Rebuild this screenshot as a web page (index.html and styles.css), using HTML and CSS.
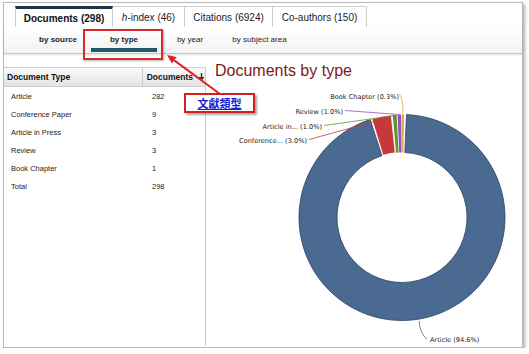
FILE: index.html
```html
<!DOCTYPE html>
<html lang="en">

<head>
  <meta name="viewport" content="width=device-width, initial-scale=1.0" />
  <title>Documents by type</title>
  <link rel="stylesheet" href="styles.css">
</head>

<body>

  <div class="frame">

    <div class="tabs">
      <div class="tab active" style="width:98px">Documents (298)</div>
      <div class="tab" style="width:72px"><i>h</i>-index (46)</div>
      <div class="tab" style="width:88px">Citations (6924)</div>
      <div class="tab" style="width:94px">Co-authors (150)</div>
    </div>

    <div class="subnav">
      <div class="sub bold">by source</div>
      <div class="sub bold current">by type</div>
      <div class="sub">by year</div>
      <div class="sub wide">by subject area</div>
    </div>

    <div class="main">
      <div class="left">
        <div class="row head">
          <div class="name">Document Type</div>
          <div class="count">Documents
            <svg class="sort" width="7" height="8" viewBox="0 0 7 8"><path d="M3.5 0v5" stroke="#333" stroke-width="1.4"/><path d="M0.5 4h6L3.5 8z" fill="#333"/></svg>
          </div>
        </div>
        <div class="row"><div class="name">Article</div><div class="count">282</div></div>
        <div class="row"><div class="name">Conference Paper</div><div class="count">9</div></div>
        <div class="row"><div class="name">Article in Press</div><div class="count">3</div></div>
        <div class="row"><div class="name">Review</div><div class="count">3</div></div>
        <div class="row"><div class="name">Book Chapter</div><div class="count">1</div></div>
        <div class="row"><div class="name">Total</div><div class="count">298</div></div>
      </div>

      <div class="right">
        <div class="chart-title">Documents by type</div>
        <svg class="chart" width="317" height="260" viewBox="0 0 317 260">
          <!-- slices -->
          <path d="M200.49 28.6 A103 103 0 1 1 164.17 33.54 L175.91 69.68 A65 65 0 1 0 198.84 66.56 Z" fill="#4a6a92" stroke="#26425f" stroke-width="0.8"/>
          <path d="M165.88 33.0 A103 103 0 0 1 185.24 29.07 L189.21 66.86 A65 65 0 0 0 176.99 69.34 Z" fill="#c6383c" stroke="#fff" stroke-width="0.8"/>
          <path d="M186.67 28.92 A103 103 0 0 1 190.61 28.64 L192.6 66.59 A65 65 0 0 0 190.11 66.77 Z" fill="#5f942f"/>
          <path d="M191.51 28.6 A103 103 0 0 1 195.28 28.5 L195.55 66.5 A65 65 0 0 0 193.17 66.56 Z" fill="#8c56c6"/>
          <path d="M196 28.5 A103 103 0 0 1 198.16 28.52 L197.36 66.51 A65 65 0 0 0 196 66.5 Z" fill="#f0a447"/>

          <!-- leader lines -->
          <path d="M193 8 Q197 10 197 28" fill="none" stroke="#f0a447" stroke-width="0.8"/>
          <path d="M139 24.5 L193 28.5" fill="none" stroke="#8c56c6" stroke-width="0.8"/>
          <path d="M118 39.5 L189 29.5" fill="none" stroke="#5f942f" stroke-width="0.8"/>
          <path d="M103 53.5 L181 32" fill="none" stroke="#c6383c" stroke-width="0.8"/>
          <path d="M213 235 Q214 248 221 253" fill="none" stroke="#4a6a92" stroke-width="0.8"/>

          <!-- labels -->
          <text x="193" y="13" text-anchor="end" class="lbl">Book Chapter (0.3%)</text>
          <text x="137" y="28" text-anchor="end" class="lbl">Review (1.0%)</text>
          <text x="116" y="43" text-anchor="end" class="lbl">Article in... (1.0%)</text>
          <text x="101" y="57" text-anchor="end" class="lbl">Conference... (3.0%)</text>
          <text x="224" y="256" class="lbl">Article (94.6%)</text>
        </svg>
      </div>
    </div>

    <!-- annotation -->
    <div class="mark"></div>
    <svg class="arrow" width="70" height="50" viewBox="0 0 70 50">
      <line x1="60" y1="44" x2="14.25" y2="10.34" stroke="#e02222" stroke-width="2"/>
      <polygon points="7,5 16.62,7.12 11.88,13.56" fill="#e02222"/>
    </svg>
    <div class="note">文獻類型</div>

  </div>

</body>

</html>
```

FILE: styles.css
```css
* {
  padding: 0;
  margin: 0;
  box-sizing: border-box;
  font-family: 'Liberation Sans', Arial, sans-serif;
}

body {
  background-color: #ffffff;
  color: #111111;
}

.frame {
  position: relative;
  margin: 2px 0 0 3px;
  width: 520px;
  height: 346px;
  border: 1px solid #b9b9b9;
  box-shadow: 2px 2px 3px rgba(0, 0, 0, 0.3);
  background-color: #ffffff;
}

/* top tabs */
.tabs {
  display: flex;
  height: 24px;
  padding: 3px 0 0 11px;
}

.tab {
  height: 21px;
  font-size: 10px;
  color: #222222;
  display: flex;
  align-items: center;
  justify-content: center;
  border: 1px solid #cfcfcf;
  border-bottom: none;
  border-left: none;
  background-color: #ffffff;
}

.tab.active {
  font-weight: bold;
  border-top: 3px solid #1d3548;
  border-left: 1px solid #cfcfcf;
  color: #111111;
}

/* sub navigation */
.subnav {
  display: flex;
  height: 27px;
  padding-left: 21px;
  background: linear-gradient(#ffffff, #f2f2f2);
  border-bottom: 1px solid #c8c8c8;
  box-shadow: 0 1px 2px rgba(0, 0, 0, 0.12);
}

.sub {
  width: 66px;
  font-size: 8px;
  color: #222222;
  text-align: center;
  padding-top: 8px;
  line-height: 10px;
  display: flex;
  flex-direction: column;
}

.sub.wide {
  width: 73px;
}

.sub.bold {
  font-weight: bold;
}

.sub.current::after {
  content: "";
  display: block;
  margin-top: auto;
  height: 4px;
  margin-bottom: 1px;
  background-color: #1e5b66;
}

/* content */
.main {
  display: flex;
  margin-top: 13px;
  height: 279px;
}

.left {
  width: 202px;
  border-right: 1px solid #cccccc;
}

.row {
  display: flex;
  height: 18px;
  align-items: center;
  font-size: 7.5px;
  color: #222222;
}

.row .name {
  width: 141px;
  padding-left: 7px;
}

.row .count {
  padding-left: 7px;
  display: flex;
  align-items: center;
}

.row.head {
  height: 20px;
  font-size: 8.5px;
  font-weight: bold;
  color: #111111;
  background: linear-gradient(#fbfbfb, #e3e3e3);
  border-top: 1px solid #d0d0d0;
  border-bottom: 1px solid #cccccc;
}

.row.head .name {
  padding-left: 3px;
  height: 100%;
  display: flex;
  align-items: center;
  border-right: 1px solid #cccccc;
}

.row.head .count {
  padding-left: 4px;
}

.sort {
  margin-left: 5px;
}

.right {
  flex: 1;
}

.chart-title {
  margin-top: -6px;
  height: 20px;
  line-height: 20px;
  padding-left: 9px;
  font-size: 16px;
  color: #7d1a1a;
}

.chart {
  display: block;
  margin-top: 5px;
  overflow: visible;
}

.lbl {
  font-family: 'DejaVu Sans', sans-serif;
  font-size: 6.6px;
  fill: #222222;
}

/* annotation */
.mark {
  position: absolute;
  left: 79px;
  top: 26px;
  width: 80px;
  height: 31px;
  border: 2px solid #d92b2b;
  box-shadow: 1px 1px 2px rgba(0, 0, 0, 0.3);
}

.arrow {
  position: absolute;
  left: 156px;
  top: 47px;
}

.note {
  position: absolute;
  left: 180px;
  top: 90px;
  width: 71px;
  height: 20px;
  border: 2px solid #d62020;
  background-color: #ffffff;
  box-shadow: 2px 2px 2px rgba(0, 0, 0, 0.35);
  font-family: 'Noto Sans CJK TC', sans-serif;
  font-size: 11px;
  font-weight: bold;
  line-height: 16px;
  text-align: center;
  color: #1c1cd8;
  text-decoration: underline;
}
```
